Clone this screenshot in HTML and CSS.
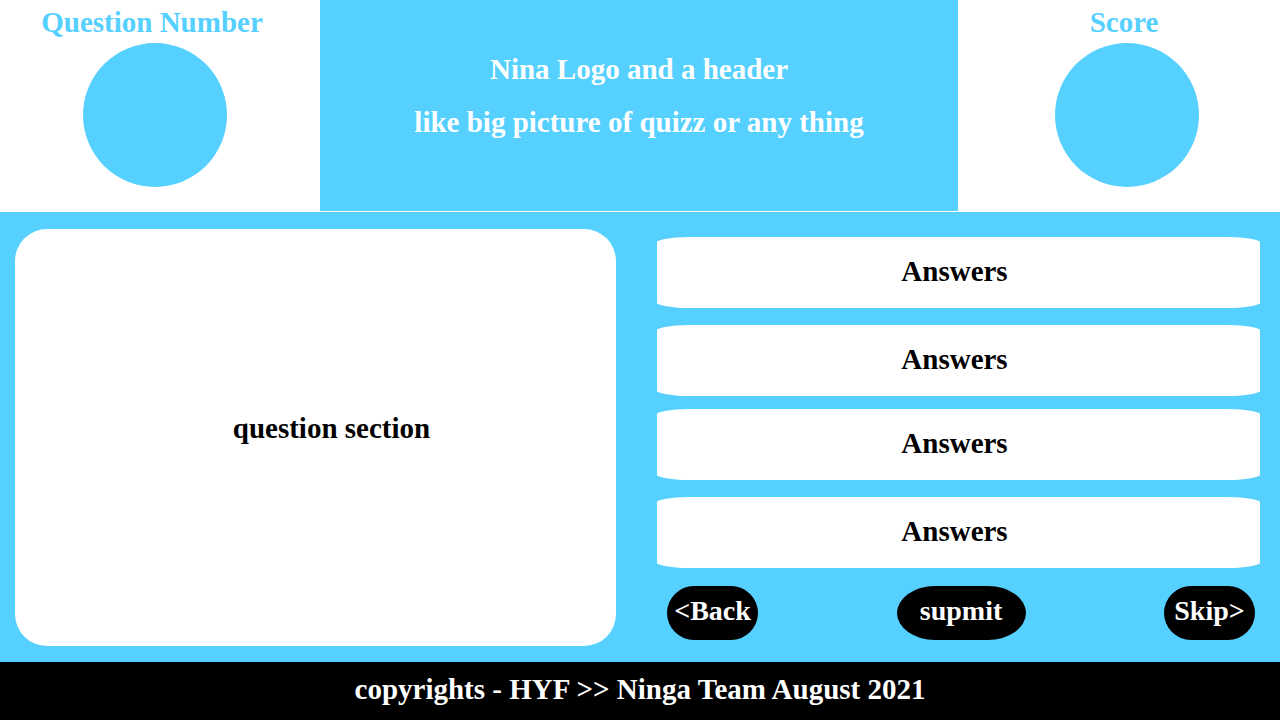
FILE: index.html
```html
<!DOCTYPE html>
<html lang="en">
<head>
  <meta charset="utf-8">
  <meta name="viewport" content="width=device-width, initial-scale=1">
  <title>Quiz</title>
  <link rel="stylesheet" href="styles.css">
</head>
<body class="page">
  <header class="header">
    <section class="stat stat-question">
      <h2 class="stat-label">Question Number</h2>
      <div class="stat-circle"></div>
    </section>
    <div class="banner">
      <p class="banner-line">Nina Logo and a header</p>
      <p class="banner-line">like big picture of quizz or any thing</p>
    </div>
    <section class="stat stat-score">
      <h2 class="stat-label">Score</h2>
      <div class="stat-circle"></div>
    </section>
  </header>

  <main class="quiz">
    <section class="question">
      <p class="question-text">question section</p>
    </section>
    <section class="choices">
      <div class="answers">
        <button class="answer" type="button">Answers</button>
        <button class="answer" type="button">Answers</button>
        <button class="answer" type="button">Answers</button>
        <button class="answer" type="button">Answers</button>
      </div>
      <nav class="actions">
        <button class="action" type="button">&lt;Back</button>
        <button class="action action-submit" type="button">supmit</button>
        <button class="action" type="button">Skip&gt;</button>
      </nav>
    </section>
  </main>

  <footer class="footer">copyrights - HYF &gt;&gt; Ninga Team August 2021</footer>
</body>
</html>
```

FILE: styles.css
```css
:root {
  --sky: #55d0ff;
}

* {
  box-sizing: border-box;
}

.page {
  display: flex;
  flex-direction: column;
  min-height: 100vh;
  margin: 0;
  background: #fff;
  font: bold 29px/32px "Liberation Serif", "Times New Roman", serif;
}

.header {
  display: grid;
  grid-template-columns: 160fr 319fr 161fr;
  min-height: 212px;
  padding-bottom: 1px;
}

.stat {
  display: flex;
  flex-direction: column;
  align-items: center;
  gap: 5px;
  padding-top: 6px;
  color: var(--sky);
}

.stat-question {
  padding-right: 10px;
}

.stat-score {
  padding-left: 16px;
}

.stat-label {
  margin: 0;
  padding-right: 6px;
  font-size: 29px;
  white-space: nowrap;
}

.stat-circle {
  width: 144px;
  height: 144px;
  border-radius: 50%;
  background: var(--sky);
}

.banner {
  display: flex;
  flex-direction: column;
  gap: 21px;
  padding-top: 53px;
  background: var(--sky);
  color: #fff;
  text-align: center;
}

.banner-line {
  margin: 0;
}

.quiz {
  display: grid;
  flex: 1;
  grid-template-columns: 601fr 603fr;
  column-gap: 41px;
  padding: 17px 20px 16px 15px;
  background: var(--sky);
}

.question {
  display: flex;
  align-items: center;
  justify-content: center;
  padding: 0 0 20px 32px;
  border-radius: 32px;
  background: #fff;
}

.question-text {
  margin: 0;
}

.choices {
  padding-top: 8px;
}

.answers {
  display: flex;
  flex-direction: column;
  gap: 13px;
}

.answer {
  position: relative;
  z-index: 0;
  overflow: hidden;
  min-height: 71px;
  padding: 0 8px 4px 0;
  border: 0;
  background: none;
  color: #000;
  font: inherit;
  cursor: pointer;
}

.answer:nth-child(odd) {
  margin-bottom: 4px;
}

/* A wider rounded plate, cut off by the button's straight sides */
.answer::before {
  content: "";
  position: absolute;
  z-index: -1;
  inset: 0 -2px;
  border-radius: 34px / 7px;
  background: #fff;
}

.actions {
  display: flex;
  justify-content: space-between;
  padding: 18px 5px 0 10px;
}

.action {
  min-width: 91px;
  min-height: 54px;
  padding: 0 0 4px;
  border: 0;
  border-radius: 27px;
  background: #000;
  color: #fff;
  font: inherit;
  font-size: 28px;
  cursor: pointer;
}

.action-submit {
  min-width: 129px;
  border-radius: 38px / 27px;
}

.footer {
  padding: 11px 16px 15px;
  background: #000;
  color: #fff;
  text-align: center;
}
```
